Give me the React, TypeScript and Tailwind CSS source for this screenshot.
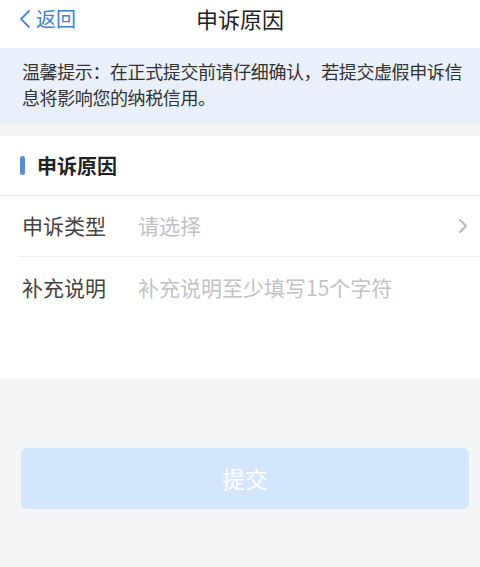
import React from "react";

export default function App() {
  return (
    <div
      className="w-[480px] h-[567px] bg-[#f4f5f7] flex flex-col overflow-hidden"
      style={{ fontFamily: '"Noto Sans CJK SC", "Noto Sans", sans-serif' }}
    >
      {/* Header */}
      <div className="h-[48px] bg-white relative flex items-start justify-center pt-[3px]">
        <div className="absolute left-[18px] top-[5px] flex items-center text-[#3d82d6]">
          <svg width="14" height="22" viewBox="0 0 14 22" className="mr-[4px]">
            <path d="M11 3 L3 11 L11 19" fill="none" stroke="#4a88d6" strokeWidth="1.8" strokeLinecap="round" strokeLinejoin="round" />
          </svg>
          <span className="text-[20px] leading-[28px]">返回</span>
        </div>
        <span className="text-[22px] leading-[30px] text-[#222]">申诉原因</span>
      </div>

      {/* Notice */}
      <div className="bg-[#e9f0fa] pl-[22px] pr-[8px] pt-[10px] pb-[12px] h-[76px] text-[18px] leading-[26px] tracking-[-0.4px] text-[#333]">
        温馨提示：在正式提交前请仔细确认，若提交虚假申诉信息将影响您的纳税信用。
      </div>

      <div className="h-[12px]" />

      {/* Form section */}
      <div className="bg-white h-[243px] flex flex-col">
        <div className="h-[60px] flex items-center pl-[20px] border-b border-[#e8e8ea]">
          <div className="w-[5px] h-[19px] rounded-[3px] bg-[#5a8bcf] mr-[12px]" />
          <span className="text-[20px] font-bold text-[#222] leading-none">申诉原因</span>
        </div>
        <div className="ml-[18px] h-[61px] flex items-center border-b border-[#efeff2]">
          <span className="pl-[4px] text-[21px] text-[#444] w-[120px]">申诉类型</span>
          <span className="text-[21px] text-[#c2c2c6] flex-1">请选择</span>
          <svg width="12" height="16" viewBox="0 0 12 16" className="mr-[11px]">
            <path d="M3 2 L9 8 L3 14" fill="none" stroke="#b8b8bc" strokeWidth="2" strokeLinecap="round" strokeLinejoin="round" />
          </svg>
        </div>
        <div className="ml-[18px] h-[62px] flex items-center">
          <span className="pl-[4px] text-[21px] text-[#444] w-[120px]">补充说明</span>
          <span className="text-[21px] text-[#c2c2c6]">补充说明至少填写15个字符</span>
        </div>
      </div>

      {/* Button */}
      <div className="pl-[21px] pr-[11px] mt-[69px]">
        <div className="h-[61px] rounded-[6px] bg-[#d4e6fb] flex items-center justify-center">
          <span className="text-[23px] text-white">提交</span>
        </div>
      </div>
    </div>
  );
}
